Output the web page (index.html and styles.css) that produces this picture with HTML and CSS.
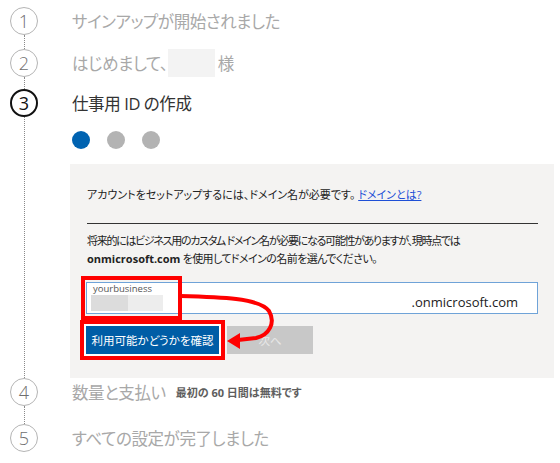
FILE: index.html
```html
<!DOCTYPE html>
<html lang="ja">

<head>
    <meta charset="UTF-8">
    <meta name="viewport" content="width=device-width, initial-scale=1.0">
    <title>サインアップ</title>
    <link rel="stylesheet" href="styles.css">
</head>

<body>
    <div class="steps">
        <div class="step step-1">
            <div class="rail"><span class="num">1</span><span class="line"></span></div>
            <div class="content">
                <div class="title">サインアップが開始されました</div>
            </div>
        </div>

        <div class="step step-2">
            <div class="rail"><span class="num">2</span><span class="line"></span></div>
            <div class="content">
                <div class="title">はじめまして、<span class="name-blank"></span>様</div>
            </div>
        </div>

        <div class="step step-3 current">
            <div class="rail"><span class="num">3</span><span class="line"></span></div>
            <div class="content">
                <div class="title">仕事用 ID の作成</div>
                <div class="dots">
                    <span class="dot active"></span>
                    <span class="dot"></span>
                    <span class="dot"></span>
                </div>

                <div class="panel">
                    <p class="intro">アカウントをセットアップするには、ドメイン名が必要です。 <a href="#">ドメインとは?</a></p>
                    <hr>
                    <p class="note"><span class="tight">将来的にはビジネス用のカスタム ドメイン名が必要になる可能性がありますが、現時点では</span><br><b>onmicrosoft.com</b> を使用してドメインの名前を選んでください。</p>

                    <div class="domain">
                        <div class="field">
                            <span class="label">yourbusiness</span>
                            <span class="redact"></span>
                        </div>
                        <span class="suffix">.onmicrosoft.com</span>
                        <div class="mark"></div>
                    </div>

                    <div class="buttons">
                        <button class="check-btn">利用可能かどうかを確認</button>
                        <button class="next-btn" disabled>次へ</button>
                    </div>

                    <!-- annotation arrow -->
                    <svg class="arrow" width="484" height="214">
                        <path d="M110 132 C150 133 190 134 199 147 C206 159 199 171 186 174 L168 176" fill="none" stroke="#f00" stroke-width="4" stroke-linecap="round" />
                        <polygon points="157,177 170,169 170,185" fill="#f00" />
                    </svg>
                </div>
            </div>
        </div>

        <div class="step step-4">
            <div class="rail"><span class="num">4</span><span class="line"></span></div>
            <div class="content">
                <div class="title">数量と支払い <small>最初の 60 日間は無料です</small></div>
            </div>
        </div>

        <div class="step step-5">
            <div class="rail"><span class="num">5</span></div>
            <div class="content">
                <div class="title">すべての設定が完了しました</div>
            </div>
        </div>
    </div>
</body>

</html>
```

FILE: styles.css
```css
body {
    margin: 0;
    background-color: #fff;
    font-family: "Open Sans", "Noto Sans CJK JP", sans-serif;
    color: #222;
}

.steps {
    padding-top: 7px;
}

.step {
    display: flex;
}

.step-1 {
    min-height: 42px;
}

.step-2 {
    min-height: 40px;
}

.step-4 {
    min-height: 46px;
}

.rail {
    width: 48px;
    display: flex;
    flex-direction: column;
    align-items: center;
}

.num {
    width: 28px;
    height: 28px;
    box-sizing: border-box;
    border: 1.5px solid #b4b4b4;
    border-radius: 50%;
    display: flex;
    align-items: center;
    justify-content: center;
    font-size: 18px;
    font-weight: 300;
    color: #6e6e6e;
    flex-shrink: 0;
}

.line {
    flex: 1;
    border-left: 1px dotted #8a8a8a;
}

.current .num {
    border: 2px solid #111;
    color: #111;
    font-weight: 400;
}

.content {
    flex: 1;
    padding-left: 22px;
    padding-right: 6px;
}

.title {
    height: 28px;
    padding-left: 2px;
    font-size: 16.5px;
    letter-spacing: -0.4px;
    font-feature-settings: "palt";
    color: #a8a8a8;
    display: flex;
    align-items: center;
    white-space: nowrap;
}

.current .title {
    color: #333;
}

.title small {
    margin-left: 10px;
    font-size: 11px;
    font-weight: bold;
    letter-spacing: 0;
    color: #5e5e5e;
}

.name-blank {
    display: inline-block;
    width: 47px;
    height: 28px;
    background-color: #f3f3f3;
    margin: 0 3px 0 0;
}

.dots {
    display: flex;
    gap: 17px;
    margin-top: 14px;
    padding-left: 2px;
}

.dot {
    width: 18px;
    height: 18px;
    border-radius: 50%;
    background-color: #b3b3b3;
}

.dot.active {
    background-color: #0063b1;
}

.panel {
    position: relative;
    margin-top: 15px;
    background-color: #f4f3f2;
    padding: 22px 16px 24px 17px;
    font-size: 11px;
    font-feature-settings: "palt";
}

.panel p {
    margin: 0;
    line-height: 18px;
}

.note {
    letter-spacing: -0.6px;
}

.note .tight {
    letter-spacing: -1.3px;
}

.note b {
    letter-spacing: 0;
}

.panel a {
    color: #1e4fd6;
}

.panel hr {
    border: none;
    border-top: 1px solid #333;
    margin: 19px 0 8px;
}

.domain {
    position: relative;
    margin: 14px 0 0 -1px;
    height: 32px;
    box-sizing: border-box;
    border: 1px solid #6fa3d8;
    background-color: #fff;
    display: flex;
    justify-content: space-between;
    align-items: flex-end;
    padding: 0 19px 2px 4px;
}

.field {
    display: flex;
    flex-direction: column;
}

.label {
    font-size: 9.5px;
    line-height: 12px;
    color: #555;
    padding-left: 2px;
}

.redact {
    width: 72px;
    height: 16px;
    background: linear-gradient(to right, #dcdcdc 0 37px, #ededed 37px);
}

.suffix {
    font-size: 13px;
    line-height: 18px;
    color: #222;
}

.mark {
    position: absolute;
    left: -6px;
    top: -7px;
    width: 101px;
    height: 44px;
    box-sizing: border-box;
    border: 4px solid #f00;
}

.buttons {
    display: flex;
    margin-top: 12px;
}

.buttons button {
    height: 28px;
    border: none;
    font-family: inherit;
    font-size: 11.5px;
    font-feature-settings: "palt";
    padding: 0;
}

.check-btn {
    width: 133px;
    margin-left: -1px;
    background-color: #005da6;
    color: #fff;
    box-shadow: 0 0 0 2px #fff, 0 0 0 6px #f00;
}

.next-btn {
    width: 86px;
    margin-left: 8px;
    background-color: #c8c8c8;
    color: #e8e8e8;
}

.arrow {
    position: absolute;
    left: 0;
    top: 0;
    pointer-events: none;
}
```
